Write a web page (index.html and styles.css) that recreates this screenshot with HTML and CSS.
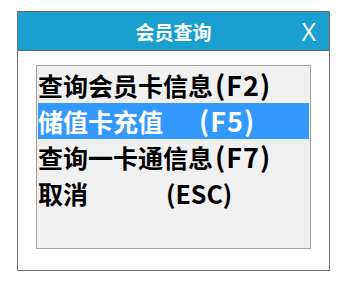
FILE: index.html
```html
<!DOCTYPE html>
<html>

<head>
  <meta charset="utf-8">
  <meta name="viewport" content="width=device-width, initial-scale=1">
  <link rel="stylesheet" href="styles.css">
</head>

<body>
  <div class="dialog">
    <div class="titlebar">
      <span class="title">会员查询</span>
      <span class="close">X</span>
    </div>

    <div class="content">
      <ul class="listbox">
        <li>查询会员卡信息<span class="key">(F2)</span></li>
        <li class="selected">储值卡充值<span class="key key-f5">(F5)</span></li>
        <li>查询一卡通信息<span class="key">(F7)</span></li>
        <li>取消<span class="key-esc">(ESC)</span></li>
      </ul>
    </div>
  </div>
</body>

</html>
```

FILE: styles.css
```css
/* ----------page--------------- */
body {
  margin: 0px;
  padding: 0px;
  background-color: #fff;
  font-family: "Noto Sans CJK SC", "Noto Sans", sans-serif;
}

/* ----------dialog--------------- */
.dialog {
  width: 311px;
  height: 258px;
  margin: 11px 0 0 17px;
  border: 1px solid #707070;
  background-color: #fff;
  display: flex;
  flex-direction: column;
}

.titlebar {
  position: relative;
  height: 38px;
  background-color: #1a9fd0;
  border-bottom: 1px solid #5a6a74;
  display: flex;
  align-items: center;
  justify-content: center;
}

.title {
  color: #fff;
  font-weight: bold;
  font-size: 19px;
}

.close {
  position: absolute;
  right: 13px;
  top: 4px;
  color: #fff;
  font-family: "Open Sans", sans-serif;
  font-size: 25px;
  line-height: 30px;
}

.content {
  padding: 14px 18px 21px 18px;
  flex: 1;
  display: flex;
}

/* ----------listbox--------------- */
.listbox {
  flex: 1;
  margin: 0px;
  padding: 1px;
  list-style: none;
  background-color: #f0f0f0;
  border: 1px solid #a0a0a0;
}

.listbox li {
  height: 36px;
  line-height: 36px;
  font-size: 25px;
  font-weight: bold;
  color: #000;
  white-space: nowrap;
}

.listbox li.selected {
  background-color: #3399ff;
  color: #fff;
}

.key {
  margin-left: 2px;
  font-size: 27px;
  letter-spacing: 1px;
}

.key-f5 {
  margin-left: 36px;
}

.key-esc {
  margin-left: 78px;
}
```
